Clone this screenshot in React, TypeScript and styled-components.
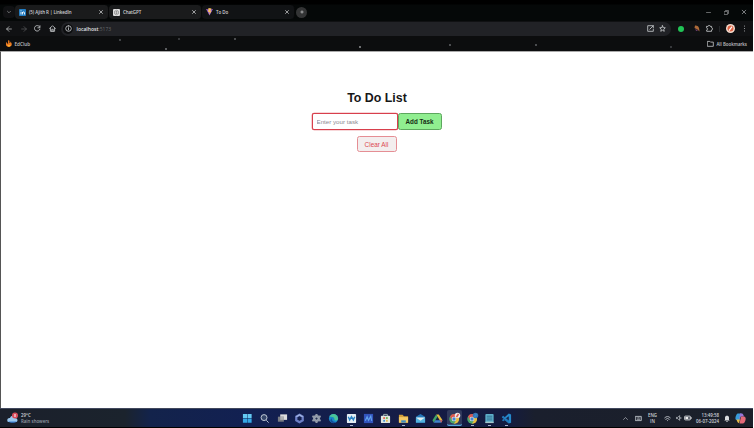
import React from "react";
import styled, { createGlobalStyle } from "styled-components";

const GlobalStyle = createGlobalStyle`
  * { box-sizing: border-box; }
  body { margin: 0; background: #000; overflow: hidden; }
`;

const Screen = styled.div`
  width: 754px;
  height: 428px;
  display: flex;
  flex-direction: column;
  background: #000;
  border-right: 1px solid #fff;
  font-family: "Open Sans", "Noto Sans", sans-serif;
  overflow: hidden;
`;

const TabStrip = styled.div`
  height: 21px;
  padding: 5px 0 2px 3px;
  display: flex;
  align-items: center;
  flex: none;
  color: #c9cacc;
  background: linear-gradient(#000 0 4px, #050808 5px);
`;

const TabMenu = styled.div`
  width: 12px;
  height: 12px;
  border-radius: 4px;
  background: #101113;
  display: flex;
  align-items: center;
  justify-content: center;
`;

const Tab = styled.div<{ $active?: boolean; $width: number }>`
  width: ${(p) => p.$width}px;
  height: 14px;
  padding: 0 4px 0 4px;
  display: flex;
  align-items: center;
  gap: 3px;
  border-radius: 4px;
  color: #d0d1d3;
  background: ${(p) => (p.$active ? "#111315" : "#1a1b1c")};
  border-right: 1px solid #08090a;
`;

const TabTitle = styled.span`
  flex: 1;
  font-size: 4.5px;
  font-weight: 600;
  letter-spacing: -0.08px;
  line-height: 8px;
  white-space: nowrap;
`;

const NewTab = styled.div`
  width: 11px;
  height: 11px;
  margin-left: 1px;
  border-radius: 50%;
  background: #333435;
  display: flex;
  align-items: center;
  justify-content: center;
`;

const WindowControls = styled.div`
  margin-left: auto;
  width: 54px;
  display: grid;
  grid-template-columns: repeat(3, 18px);
  justify-items: center;
  align-items: center;
  color: #a5a6a8;
`;

const Toolbar = styled.div`
  height: 15px;
  flex: none;
  display: flex;
  align-items: center;
  background: #101113;
  color: #c6c8ca;
`;

const NavButtons = styled.div`
  width: 61px;
  padding-left: 2px;
  display: grid;
  grid-template-columns: repeat(4, 14.4px);
  justify-items: center;
  align-items: center;
`;

const AddressBar = styled.div`
  width: 610px;
  height: 14px;
  padding: 0 5px 0 2px;
  border-radius: 7px;
  display: flex;
  align-items: center;
  gap: 3.5px;
  background: #212226;
`;

const SiteInfo = styled.span`
  width: 10px;
  height: 10px;
  border-radius: 50%;
  display: flex;
  align-items: center;
  justify-content: center;
  background: #0c0d0f;
`;

const Address = styled.span`
  flex: 1;
  font-size: 5px;
  font-weight: 600;
  line-height: 8px;
  color: #e0e1e3;
`;

const Port = styled.span`
  color: #66686b;
  font-weight: 400;
`;

const AddressActions = styled.div`
  display: flex;
  gap: 5px;
`;

const Extensions = styled.div`
  flex: 1;
  display: grid;
  grid-template-columns: 20px 11px 15px 5px 16px 12px;
  justify-items: center;
  align-items: center;
`;

const Dot = styled.span`
  width: 6px;
  height: 6px;
  border-radius: 50%;
  background: #21c456;
`;

const Divider = styled.span`
  width: 1px;
  height: 6px;
  background: #26282b;
`;

const Bookmarks = styled.div`
  height: 15px;
  flex: none;
  padding: 0 6px 0 6px;
  display: flex;
  align-items: center;
  gap: 2.5px;
  color: #c0c1c3;
  background:
    radial-gradient(circle at 120px 4px, #535558 0.6px, transparent 1px),
    radial-gradient(circle at 166px 13px, #77797c 0.6px, transparent 1px),
    radial-gradient(circle at 179px 3px, #45474a 0.6px, transparent 1px),
    radial-gradient(circle at 235px 3px, #606265 0.6px, transparent 1px),
    radial-gradient(circle at 360px 11px, #929496 0.6px, transparent 1px),
    radial-gradient(circle at 450px 9px, #636568 0.6px, transparent 1px),
    radial-gradient(circle at 536px 9px, #606265 0.6px, transparent 1px),
    radial-gradient(circle at 671px 11px, #45474a 0.6px, transparent 1px),
    #0c0d0e;
`;

const BookmarkLabel = styled.span<{ $push?: boolean }>`
  font-size: ${(p) => (p.$push ? 4.7 : 4.4)}px;
  font-weight: 600;
  line-height: 8px;
  white-space: nowrap;
  ${(p) => p.$push && "margin-right: auto;"}
`;

const Page = styled.main`
  height: 357px;
  flex: none;
  padding: 38px 1px 0 0;
  border-left: 1px solid #555;
  border-top: 1px solid #aaa;
  display: flex;
  flex-direction: column;
  align-items: center;
  background: #fff;
  font-family: "Liberation Sans", Arial, sans-serif;
`;

const Heading = styled.h1`
  margin: 0 0 0 1px;
  font-size: 12.4px;
  line-height: 16px;
  font-weight: 700;
  color: #171717;
`;

const TaskForm = styled.form`
  margin: 7px 0 6px;
  display: flex;
`;

const TaskInput = styled.input`
  width: 86px;
  height: 17px;
  padding: 0 4px;
  border: 1.3px solid #d83f4c;
  box-shadow: 0 0 0 0.3px #e0606a;
  border-radius: 2px;
  outline: none;
  background: #fff;
  font: 6.2px "Liberation Sans", Arial, sans-serif;
  &::placeholder { color: #8b8b91; }
`;

const Button = styled.button<{ $kind: "add" | "clear" }>`
  width: ${(p) => (p.$kind === "add" ? 44 : 40)}px;
  height: ${(p) => (p.$kind === "add" ? 17 : 16)}px;
  padding: 0;
  border-radius: 2.5px;
  border: 1px solid ${(p) => (p.$kind === "add" ? "#5da75e" : "#e58e94")};
  background: ${(p) => (p.$kind === "add" ? "#90ee90" : "#f3eeee")};
  color: ${(p) => (p.$kind === "add" ? "#142a14" : "#dc4850")};
  font: ${(p) => (p.$kind === "add" ? "700 6.3px" : "400 6.4px")} "Liberation Sans", Arial, sans-serif;
`;

const Taskbar = styled.footer`
  height: 19px;
  flex: none;
  display: grid;
  grid-template-columns: 239px 277px 1fr;
  align-items: center;
  border-top: 1px solid #41485d;
  background: linear-gradient(90deg, #1b202b 0, #1b232d 125px, #13234b 150px, #122052 250px, #151c46 400px, #141b40 508px, #1a1f2d 535px, #1b202a 100%);
`;

const Weather = styled.div`
  padding-left: 7px;
  display: flex;
  align-items: center;
  gap: 2px;
`;

const SmallText = styled.div<{ $align?: string }>`
  font-size: 4.4px;
  font-weight: 600;
  line-height: 6px;
  text-align: ${(p) => p.$align ?? "left"};
  white-space: nowrap;
  color: #cfd3da;
`;

const Dim = styled.div`
  color: #979da7;
`;

const Dock = styled.div`
  display: grid;
  grid-template-columns: repeat(16, 17.27px);
  height: 18px;
`;

const DockItem = styled.div<{ $mark?: string; $lit?: boolean }>`
  display: flex;
  align-items: center;
  justify-content: center;
  border-radius: 2px;
  background: ${(p) => (p.$lit ? "#30395c" : "transparent")};
  margin: 1px;
  box-shadow: ${(p) => (p.$lit ? "inset 0 -1.4px 0 -0.2px #55a9dc" : "none")};
  background-image: ${(p) => (p.$mark && !p.$lit ? `linear-gradient(${p.$mark}, ${p.$mark})` : "none")};
  background-repeat: no-repeat;
  background-size: 3px 1px;
  background-position: 50% 100%;
`;

const Tray = styled.div`
  padding-left: 102px;
  display: grid;
  grid-template-columns: 14px 12px 17px 13px 9px 10px 29px 10px 17px;
  justify-items: center;
  align-items: center;
  color: #c6cad0;
`;

const Line = styled.svg`
  display: block;
  flex: none;
  fill: none;
  stroke: currentColor;
  stroke-width: 1.2;
  stroke-linecap: round;
  stroke-linejoin: round;
`;

const Art = styled.svg`
  display: block;
  flex: none;
`;

const Icon = ({ d, size = 7 }: { d: string; size?: number }) => (
  <Line width={size} height={size} viewBox="0 0 10 10">
    <path d={d} />
  </Line>
);

const closePath = "M2.5 2.5 7.5 7.5M7.5 2.5 2.5 7.5";

const LinkedIn = () => (
  <Art width="7" height="7" viewBox="0 0 14 14">
    <rect width="14" height="14" rx="1.5" fill="#227cc1" />
    <path d="M4 6v5M7 6v5M7 8c0-3 4-3 4 0v3" fill="none" stroke="#fff" strokeWidth="1.7" />
    <circle cx="4" cy="3.5" r="1" fill="#fff" />
  </Art>
);

const ChatIcon = () => (
  <Art width="7" height="7" viewBox="0 0 14 14">
    <rect width="14" height="14" rx="2" fill="#ddd" />
    <path d="m7 2.4 4 2.3v4.6l-4 2.3-4-2.3V4.7ZM5 6l4-2M9 8l-4 2M7 5v4" fill="none" stroke="#666" strokeWidth="1" />
  </Art>
);

const Vite = () => (
  <Art width="7" height="8" viewBox="0 0 14 16">
    <path d="M0 2 7 15 14 2 7 3Z" fill="#9761c9" />
    <path d="m5 0 6 1-2 5 2 .5L6.5 13 7 8H4Z" fill="#f8bd62" />
  </Art>
);

const Flame = () => (
  <Art width="6" height="7" viewBox="0 0 12 14">
    <path d="M5 0c5 3-1 4 3 6 1-1 1-2 0-3 5 3 5 10-2 11C-2 13-1 6 2 4c0 2 0 3 2 4 1-3-1-4 1-8Z" fill="#ee7c22" />
    <path d="M3 10h6c0 4-6 4-6 0Z" fill="#ffb12d" />
  </Art>
);

const Chrome = ({ badge }: { badge: string }) => (
  <Art width="13" height="13" viewBox="0 0 26 26">
    <circle cx="12" cy="14" r="9.5" fill="#4ca56b" />
    <path d="M4 9a9.5 9.5 0 0 1 17.5 2H12l-4 5Z" fill="#dd5950" />
    <path d="M12 10h9.2A9.5 9.5 0 0 1 12 23.5l4-7Z" fill="#e8bd3f" />
    <circle cx="12" cy="14" r="4.6" fill="#eee" />
    <circle cx="12" cy="14" r="3.4" fill="#4888cf" />
    <circle cx="19" cy="7" r="5.5" fill={badge} />
    <path d="m17 10 4-6" stroke={badge === "#eee7e5" ? "#d85c56" : "#3489c9"} strokeWidth="3" />
  </Art>
);

const glyphs: React.ReactNode[] = [
  <><path d="M2 2h9v9H2zM12 2h9v9h-9z" fill="#65c9f2" /><path d="M2 12h9v9H2zM12 12h9v9h-9z" fill="#35a8e6" /></>,
  <g fill="none" stroke="#cbd3df" strokeWidth="2"><circle cx="11" cy="10" r="6.5" fill="#344569" /><path d="m16 16 5 5" /></g>,
  <><path d="M7 3h15v12H7Z" fill="#ddd" /><path d="M2 8h13v11H2Z" fill="#797c83" /><path d="M7 8h8v7H7Z" fill="#aeb0b3" /></>,
  <><path d="m12 4 7 4v8l-7 4-7-4V8Z" fill="none" stroke="#6d7fc6" strokeWidth="5" /><path d="m5 8 7-4 7 4" fill="none" stroke="#a6b9e5" strokeWidth="2.5" /></>,
  <><g stroke="#949ba9" strokeWidth="4.5"><path d="M12 2v20M3 7l18 10M3 17 21 7" /></g><circle cx="12" cy="12" r="7.5" fill="#929aa9" /><circle cx="12" cy="12" r="3" fill="#243151" stroke="#cad0d9" /></>,
  <><circle cx="12" cy="12" r="10" fill="#198bca" /><path d="M3 9C6-1 21 0 22 12c0 6-9 6-8 1 0-4-7-6-11-4Z" fill="#4bc598" /><path d="M9 11c-3 5 3 10 10 8-8 8-20-1-10-8Z" fill="#164e9c" /></>,
  <><rect x="2" y="2" width="20" height="20" rx="2" fill="#e4edf3" /><path d="m5 8 3 7 4-7 4 7 3-7" fill="none" stroke="#2a83c7" strokeWidth="3" /></>,
  <><path d="M2 2h20v20H2Z" fill="#3254bd" /><path d="m5 17 4-9 3 8 5-9 2 10" fill="none" stroke="#61a2ec" strokeWidth="2.5" /></>,
  <><path d="M8 7V3h8v4" fill="none" stroke="#a3bab7" strokeWidth="2" /><rect x="2" y="6" width="20" height="16" rx="2" fill="#dfe7e2" /><path d="M7 9h4v4H7Z" fill="#e86c51" /><path d="M13 9h4v4h-4Z" fill="#71b553" /><path d="M7 15h4v4H7Z" fill="#4795d0" /><path d="M13 15h4v4h-4Z" fill="#e7bd50" /></>,
  <><path d="M2 4h8l3 3h9v14H2Z" fill="#d29f39" /><path d="M2 9h20v12H2Z" fill="#f3c966" /><path d="M7 16h10v5H7Z" fill="#3f8cc1" /></>,
  <><path d="M2 8 12 2l10 6v13H2Z" fill="#2376b8" /><path d="M2 10h20v11H2Z" fill="#53b3df" /><path d="m2 10 10 7 10-7" fill="#e2eff2" /></>,
  <><path d="M9 3h6l8 13h-6Z" fill="#e5ba3e" /><path d="M9 3 1 16l3 5 8-13Z" fill="#42a568" /><path d="M7 16h16l-3 5H4Z" fill="#4284cb" /><path d="m17 16 6 0-3 5Z" fill="#dd604e" /></>,
  <Chrome badge="#eee7e5" />,
  <Chrome badge="#3974b3" />,
  <><rect x="3" y="2" width="18" height="20" rx="2" fill="#5eafca" /><path d="M6 7h12M6 11h12M6 15h12" stroke="#306f93" strokeWidth="2" /><path d="M3 19h18v3H3Z" fill="#a7c6cb" /></>,
  <><path d="M17 1 5 12l12 11 5-2V3Z" fill="#2589cb" /><path d="m17 7-7 5 7 5Z" fill="#16244c" /><path d="m2 8 3-2 12 11v6L2 10ZM2 16l3 2 5-4-3-3Z" fill="#2379bc" /></>,
];
const running = [6, 9, 13, 14, 15];

export default function App() {
  return (
    <Screen>
      <GlobalStyle />
      <TabStrip>
        <TabMenu><Icon size={4} d="m1 3 4 4 4-4" /></TabMenu>
        <Tab $width={94}><LinkedIn /><TabTitle>(5) Ajith R | LinkedIn</TabTitle><Icon size={6} d={closePath} /></Tab>
        <Tab $width={93}><ChatIcon /><TabTitle>ChatGPT</TabTitle><Icon size={6} d={closePath} /></Tab>
        <Tab $width={93} $active><Vite /><TabTitle>To Do</TabTitle><Icon size={6} d={closePath} /></Tab>
        <NewTab><Icon size={6} d="M5 3v4M3 5h4" /></NewTab>
        <WindowControls>
          <Icon size={5} d="M1 5h8" />
          <Icon size={5} d="M1 3h6v6H1ZM3 1h6v6" />
          <Icon size={6} d="M2 2 8 8M8 2 2 8" />
        </WindowControls>
      </TabStrip>
      <Toolbar>
        <NavButtons>
          <Icon size={6} d="M9 5H1m4-4L1 5l4 4" />
          <Line width="6" height="6" viewBox="0 0 10 10" opacity=".4"><path d="M1 5h8M5 1l4 4-4 4" /></Line>
          <Icon size={7} d="M8.5 6A4 4 0 1 1 8 2.5M8.5 1v3h-3" />
          <Icon size={7} d="M1 5 5 1l4 4M2 4v5h6V4M4 9V6h2v3" />
        </NavButtons>
        <AddressBar>
          <SiteInfo><Icon size={7} d="M5 1a4 4 0 1 0 0 8 4 4 0 0 0 0-8M5 4.7V7M5 3v.1" /></SiteInfo>
          <Address>localhost<Port>:5173</Port></Address>
          <AddressActions>
            <Icon d="M5 1H1v8h8V6M6 1h3v3M9 1 4 6" />
            <Icon d="m5 1 1.1 2.7L9 4 6.8 6l.7 3L5 7.5 2.5 9l.7-3L1 4l2.9-.3Z" />
          </AddressActions>
        </AddressBar>
        <Extensions>
          <Dot />
          <Art width="6" height="7" viewBox="0 0 12 14"><path d="M2 1c7-1 9 5 9 12L7 9 1 6Z" fill="#ad6a38" /><path d="m2 6 6 6H4Z" fill="#643b69" /></Art>
          <Icon size={7} d="M1 2h2c0-2 3-2 3 0h2v2c2 0 2 3 0 3v2H1V7c2 0 2-3 0-3Z" />
          <Divider />
          <Art width="9" height="9" viewBox="0 0 18 18"><circle cx="9" cy="9" r="9" fill="#f5ddcf" /><circle cx="9" cy="9" r="6" fill="#df6243" /><path d="m6 13 6-8" stroke="#fff" strokeWidth="2.5" /></Art>
          <Icon size={7} d="M5 1.5v.1M5 5v.1M5 8.5v.1" />
        </Extensions>
      </Toolbar>
      <Bookmarks>
        <Flame />
        <BookmarkLabel $push>EdClub</BookmarkLabel>
        <Icon size={7} d="M1 2h3l1 1h4v6H1Z" />
        <BookmarkLabel>All Bookmarks</BookmarkLabel>
      </Bookmarks>
      <Page>
        <Heading>To Do List</Heading>
        <TaskForm onSubmit={(e) => e.preventDefault()}>
          <TaskInput placeholder="Enter your task" />
          <Button $kind="add">Add Task</Button>
        </TaskForm>
        <Button $kind="clear">Clear All</Button>
      </Page>
      <Taskbar>
        <Weather>
          <Art width="12" height="12" viewBox="0 0 24 24">
            <path d="M2 20c-4-5 1-9 4-8 2-6 9-6 10 0 6 0 6 7 3 8Z" fill="#9bc9ef" />
            <path d="M2 19h18c-3 3-13 4-18 0Z" fill="#397fd1" />
            <circle cx="16" cy="7" r="6" fill="#d94d5c" />
            <path d="M16 4v6" stroke="#fff" strokeWidth="2" />
          </Art>
          <SmallText>29°C<Dim>Rain showers</Dim></SmallText>
        </Weather>
        <Dock>
          {glyphs.map((glyph, i) => (
            <DockItem key={i} $lit={i === 12} $mark={running.includes(i) ? "#a8b2c8" : undefined}>
              {i === 12 || i === 13 ? glyph : <Art width="11" height="11" viewBox="0 0 24 24">{glyph}</Art>}
            </DockItem>
          ))}
        </Dock>
        <Tray>
          <Icon size={5} d="m1 7 4-4 4 4" />
          <Icon size={7} d="M1 2h8v6H1ZM3 4h.1M5 4h.1M7 4h.1M3 6h4" />
          <SmallText $align="center">ENG<div>IN</div></SmallText>
          <Icon size={7} d="M1 4q4-4 8 0M2.5 6q2.5-2.5 5 0M5 8v.1" />
          <Icon size={6} d="M1 4h2l3-3v8L3 6H1ZM8 4v2" />
          <Art width="8" height="6" viewBox="0 0 16 12"><rect x="1" y="2" width="12" height="8" rx="2" fill="#666b75" stroke="#d5d8dc" strokeWidth="1.5" /><path d="M3 4h5v4H3ZM14 4h1v4h-1Z" fill="#eee" /></Art>
          <SmallText $align="right">13:49:58<div>06-07-2024</div></SmallText>
          <Art width="6" height="7" viewBox="0 0 12 14"><path d="M2 10V5c0-5 8-5 8 0v5l2 1H0ZM4 12h4c0 2-4 2-4 0Z" fill="#dadcdf" /></Art>
          <Art width="11" height="11" viewBox="0 0 22 22">
            <path d="M5 1h8l-4 13H3C-1 14 1 4 5 1Z" fill="#379cda" />
            <path d="M10 1h4c2 0 3 3 4 6h-7L8 15Z" fill="#9a74d6" />
            <path d="M18 7c6 0 3 13-2 14H9l3-14Z" fill="#e46a79" />
            <path d="M3 13h7l-2 7C5 20 4 16 3 13Z" fill="#e7bd4c" />
          </Art>
        </Tray>
      </Taskbar>
    </Screen>
  );
}
